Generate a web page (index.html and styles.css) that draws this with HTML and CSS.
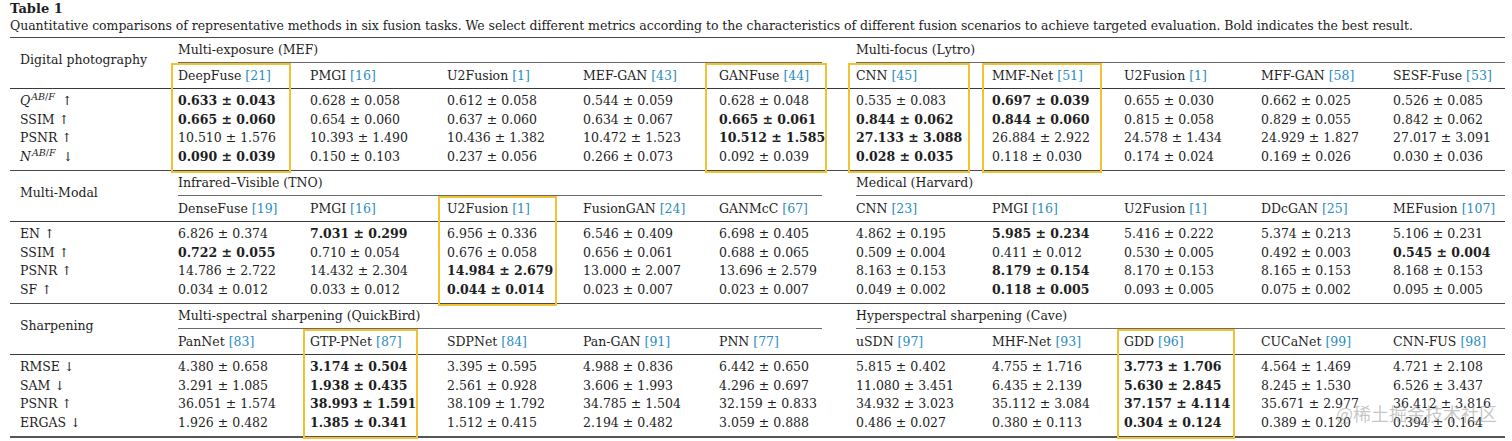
FILE: index.html
```html
<!DOCTYPE html>
<html>
<head>
<meta charset="utf-8">
<link rel="stylesheet" href="styles.css">
</head>
<body>
<div class="page">
  <div class="title">Table 1</div>
  <div class="caption">Quantitative comparisons of representative methods in six fusion tasks. We select different metrics according to the characteristics of different fusion scenarios to achieve targeted evaluation. Bold indicates the best result.</div>

  <div class="sec">
    <div class="task">Digital photography</div>
    <div class="grp grp-l">Multi-exposure (MEF)</div>
    <div class="grp grp-r">Multi-focus (Lytro)</div>
    <div class="hd hl hl-1">DeepFuse <span class="ref">[21]</span></div>
    <div class="hd">PMGI <span class="ref">[16]</span></div>
    <div class="hd">U2Fusion <span class="ref">[1]</span></div>
    <div class="hd">MEF-GAN <span class="ref">[43]</span></div>
    <div class="hd hl hl-2">GANFuse <span class="ref">[44]</span></div>
    <div class="hd hl hl-3">CNN <span class="ref">[45]</span></div>
    <div class="hd hl hl-4">MMF-Net <span class="ref">[51]</span></div>
    <div class="hd">U2Fusion <span class="ref">[1]</span></div>
    <div class="hd">MFF-GAN <span class="ref">[58]</span></div>
    <div class="hd">SESF-Fuse <span class="ref">[53]</span></div>
    <div class="mid"></div>
    <div class="lb"><i>Q</i><sup><i>AB</i>/<i>F</i></sup> ↑</div>
    <div class="c b">0.633 ± 0.043</div><div class="c">0.628 ± 0.058</div><div class="c">0.612 ± 0.058</div><div class="c">0.544 ± 0.059</div><div class="c">0.628 ± 0.048</div><div class="c">0.535 ± 0.083</div><div class="c b">0.697 ± 0.039</div><div class="c">0.655 ± 0.030</div><div class="c">0.662 ± 0.025</div><div class="c">0.526 ± 0.085</div>
    <div class="lb">SSIM ↑</div>
    <div class="c b">0.665 ± 0.060</div><div class="c">0.654 ± 0.060</div><div class="c">0.637 ± 0.060</div><div class="c">0.634 ± 0.067</div><div class="c b">0.665 ± 0.061</div><div class="c b">0.844 ± 0.062</div><div class="c b">0.844 ± 0.060</div><div class="c">0.815 ± 0.058</div><div class="c">0.829 ± 0.055</div><div class="c">0.842 ± 0.062</div>
    <div class="lb">PSNR ↑</div>
    <div class="c">10.510 ± 1.576</div><div class="c">10.393 ± 1.490</div><div class="c">10.436 ± 1.382</div><div class="c">10.472 ± 1.523</div><div class="c b">10.512 ± 1.585</div><div class="c b">27.133 ± 3.088</div><div class="c">26.884 ± 2.922</div><div class="c">24.578 ± 1.434</div><div class="c">24.929 ± 1.827</div><div class="c">27.017 ± 3.091</div>
    <div class="lb"><i>N</i><sup><i>AB</i>/<i>F</i></sup> ↓</div>
    <div class="c b">0.090 ± 0.039</div><div class="c">0.150 ± 0.103</div><div class="c">0.237 ± 0.056</div><div class="c">0.266 ± 0.073</div><div class="c">0.092 ± 0.039</div><div class="c b">0.028 ± 0.035</div><div class="c">0.118 ± 0.030</div><div class="c">0.174 ± 0.024</div><div class="c">0.169 ± 0.026</div><div class="c">0.030 ± 0.036</div>
    <div class="end"></div>
  </div>

  <div class="sec">
    <div class="task">Multi-Modal</div>
    <div class="grp grp-l">Infrared–Visible (TNO)</div>
    <div class="grp grp-r">Medical (Harvard)</div>
    <div class="hd">DenseFuse <span class="ref">[19]</span></div>
    <div class="hd">PMGI <span class="ref">[16]</span></div>
    <div class="hd hl hl-5">U2Fusion <span class="ref">[1]</span></div>
    <div class="hd">FusionGAN <span class="ref">[24]</span></div>
    <div class="hd">GANMcC <span class="ref">[67]</span></div>
    <div class="hd">CNN <span class="ref">[23]</span></div>
    <div class="hd">PMGI <span class="ref">[16]</span></div>
    <div class="hd">U2Fusion <span class="ref">[1]</span></div>
    <div class="hd">DDcGAN <span class="ref">[25]</span></div>
    <div class="hd">MEFusion <span class="ref">[107]</span></div>
    <div class="mid"></div>
    <div class="lb">EN ↑</div>
    <div class="c">6.826 ± 0.374</div><div class="c b">7.031 ± 0.299</div><div class="c">6.956 ± 0.336</div><div class="c">6.546 ± 0.409</div><div class="c">6.698 ± 0.405</div><div class="c">4.862 ± 0.195</div><div class="c b">5.985 ± 0.234</div><div class="c">5.416 ± 0.222</div><div class="c">5.374 ± 0.213</div><div class="c">5.106 ± 0.231</div>
    <div class="lb">SSIM ↑</div>
    <div class="c b">0.722 ± 0.055</div><div class="c">0.710 ± 0.054</div><div class="c">0.676 ± 0.058</div><div class="c">0.656 ± 0.061</div><div class="c">0.688 ± 0.065</div><div class="c">0.509 ± 0.004</div><div class="c">0.411 ± 0.012</div><div class="c">0.530 ± 0.005</div><div class="c">0.492 ± 0.003</div><div class="c b">0.545 ± 0.004</div>
    <div class="lb">PSNR ↑</div>
    <div class="c">14.786 ± 2.722</div><div class="c">14.432 ± 2.304</div><div class="c b">14.984 ± 2.679</div><div class="c">13.000 ± 2.007</div><div class="c">13.696 ± 2.579</div><div class="c">8.163 ± 0.153</div><div class="c b">8.179 ± 0.154</div><div class="c">8.170 ± 0.153</div><div class="c">8.165 ± 0.153</div><div class="c">8.168 ± 0.153</div>
    <div class="lb">SF ↑</div>
    <div class="c">0.034 ± 0.012</div><div class="c">0.033 ± 0.012</div><div class="c b">0.044 ± 0.014</div><div class="c">0.023 ± 0.007</div><div class="c">0.023 ± 0.007</div><div class="c">0.049 ± 0.002</div><div class="c b">0.118 ± 0.005</div><div class="c">0.093 ± 0.005</div><div class="c">0.075 ± 0.002</div><div class="c">0.095 ± 0.005</div>
    <div class="end"></div>
  </div>

  <div class="sec sec-last">
    <div class="task">Sharpening</div>
    <div class="grp grp-l">Multi-spectral sharpening (QuickBird)</div>
    <div class="grp grp-r">Hyperspectral sharpening (Cave)</div>
    <div class="hd">PanNet <span class="ref">[83]</span></div>
    <div class="hd hl hl-6">GTP-PNet <span class="ref">[87]</span></div>
    <div class="hd">SDPNet <span class="ref">[84]</span></div>
    <div class="hd">Pan-GAN <span class="ref">[91]</span></div>
    <div class="hd">PNN <span class="ref">[77]</span></div>
    <div class="hd">uSDN <span class="ref">[97]</span></div>
    <div class="hd">MHF-Net <span class="ref">[93]</span></div>
    <div class="hd hl hl-7">GDD <span class="ref">[96]</span></div>
    <div class="hd">CUCaNet <span class="ref">[99]</span></div>
    <div class="hd">CNN-FUS <span class="ref">[98]</span></div>
    <div class="mid"></div>
    <div class="lb">RMSE ↓</div>
    <div class="c">4.380 ± 0.658</div><div class="c b">3.174 ± 0.504</div><div class="c">3.395 ± 0.595</div><div class="c">4.988 ± 0.836</div><div class="c">6.442 ± 0.650</div><div class="c">5.815 ± 0.402</div><div class="c">4.755 ± 1.716</div><div class="c b">3.773 ± 1.706</div><div class="c">4.564 ± 1.469</div><div class="c">4.721 ± 2.108</div>
    <div class="lb">SAM ↓</div>
    <div class="c">3.291 ± 1.085</div><div class="c b">1.938 ± 0.435</div><div class="c">2.561 ± 0.928</div><div class="c">3.606 ± 1.993</div><div class="c">4.296 ± 0.697</div><div class="c">11.080 ± 3.451</div><div class="c">6.435 ± 2.139</div><div class="c b">5.630 ± 2.845</div><div class="c">8.245 ± 1.530</div><div class="c">6.526 ± 3.437</div>
    <div class="lb">PSNR ↑</div>
    <div class="c">36.051 ± 1.574</div><div class="c b">38.993 ± 1.591</div><div class="c">38.109 ± 1.792</div><div class="c">34.785 ± 1.504</div><div class="c">32.159 ± 0.833</div><div class="c">34.932 ± 3.023</div><div class="c">35.112 ± 3.084</div><div class="c b">37.157 ± 4.114</div><div class="c">35.671 ± 2.977</div><div class="c">36.412 ± 3.816</div>
    <div class="lb">ERGAS ↓</div>
    <div class="c">1.926 ± 0.482</div><div class="c b">1.385 ± 0.341</div><div class="c">1.512 ± 0.415</div><div class="c">2.194 ± 0.482</div><div class="c">3.059 ± 0.888</div><div class="c">0.486 ± 0.027</div><div class="c">0.380 ± 0.113</div><div class="c b">0.304 ± 0.124</div><div class="c">0.389 ± 0.120</div><div class="c">0.394 ± 0.164</div>
    <div class="end"></div>
  </div>

  <div class="watermark">@稀土掘金技术社区</div>
</div>
</body>
</html>
```

FILE: styles.css
```css
* { box-sizing: border-box; }
html, body { margin: 0; padding: 0; background: #fff; }
body {
  font-family: "DejaVu Serif", "Liberation Serif", serif;
  font-size: 12.5px;
  color: #1e1e1e;
  width: 1512px;
  height: 441px;
  overflow: hidden;
}
.page {
  position: relative;
  padding-left: 10px;
  width: 1505px;
}
.title {
  font-weight: bold;
  font-size: 13px;
  line-height: 17px;
}
.caption {
  line-height: 17px;
  white-space: nowrap;
  margin-bottom: 3px;
  letter-spacing: -0.045px;
}
.sec {
  display: grid;
  grid-template-columns: 160px 132px 137px 136px 136px 137px 136px 132px 137px 132px 120px;
  border-top: 1px solid #4a4a4a;
}
.sec-last { border-bottom: 2px solid #555; height: 135px; }
.task {
  grid-row: span 2;
  display: flex;
  align-items: center;
  padding-left: 10px;
  padding-bottom: 8px;
}
.grp {
  grid-column: span 5;
  height: 25px;
  line-height: 24px;
  border-bottom: 1px solid #6a6a6a;
  margin-left: 8px;
}
.grp-l { margin-right: 26px; }
.hd {
  line-height: 25px;
  padding-left: 8px;
  white-space: nowrap;
}
.ref { color: #2a8cc0; }
.mid {
  grid-column: 1 / -1;
  height: 4px;
  border-top: 1px solid #3a3a3a;
}
.end {
  grid-column: 1 / -1;
  height: 4px;
}
.lb {
  padding-left: 10px;
  line-height: 18.5px;
  white-space: nowrap;
}
.lb sup {
  font-size: 9.5px;
  line-height: 0;
  vertical-align: 5px;
  margin-left: 1px;
  margin-right: 3px;
}
.c {
  padding-left: 8px;
  line-height: 18.5px;
  white-space: nowrap;
}
.b { font-weight: bold; }

.hl { position: relative; }
.hl::after {
  content: "";
  position: absolute;
  top: 0;
  height: 106px;
  border: 2px solid #f1c232;
  pointer-events: none;
}
.hl-1::after { left: 1px; width: 116px; }
.hl-2::after { left: -6px; width: 118px; }
.hl-3::after { left: 0; width: 118px; }
.hl-4::after { left: -2px; width: 116px; }
.hl-5::after { left: -1px; width: 115px; }
.hl-6::after { left: 1px; width: 111px; }
.hl-7::after { left: 1px; width: 114px; }

.watermark {
  position: absolute;
  left: 1336px;
  top: 403px;
  font-family: "Noto Sans CJK SC", sans-serif;
  font-size: 18px;
  line-height: 20px;
  color: rgba(150, 150, 150, 0.55);
  white-space: nowrap;
  pointer-events: none;
}
```
